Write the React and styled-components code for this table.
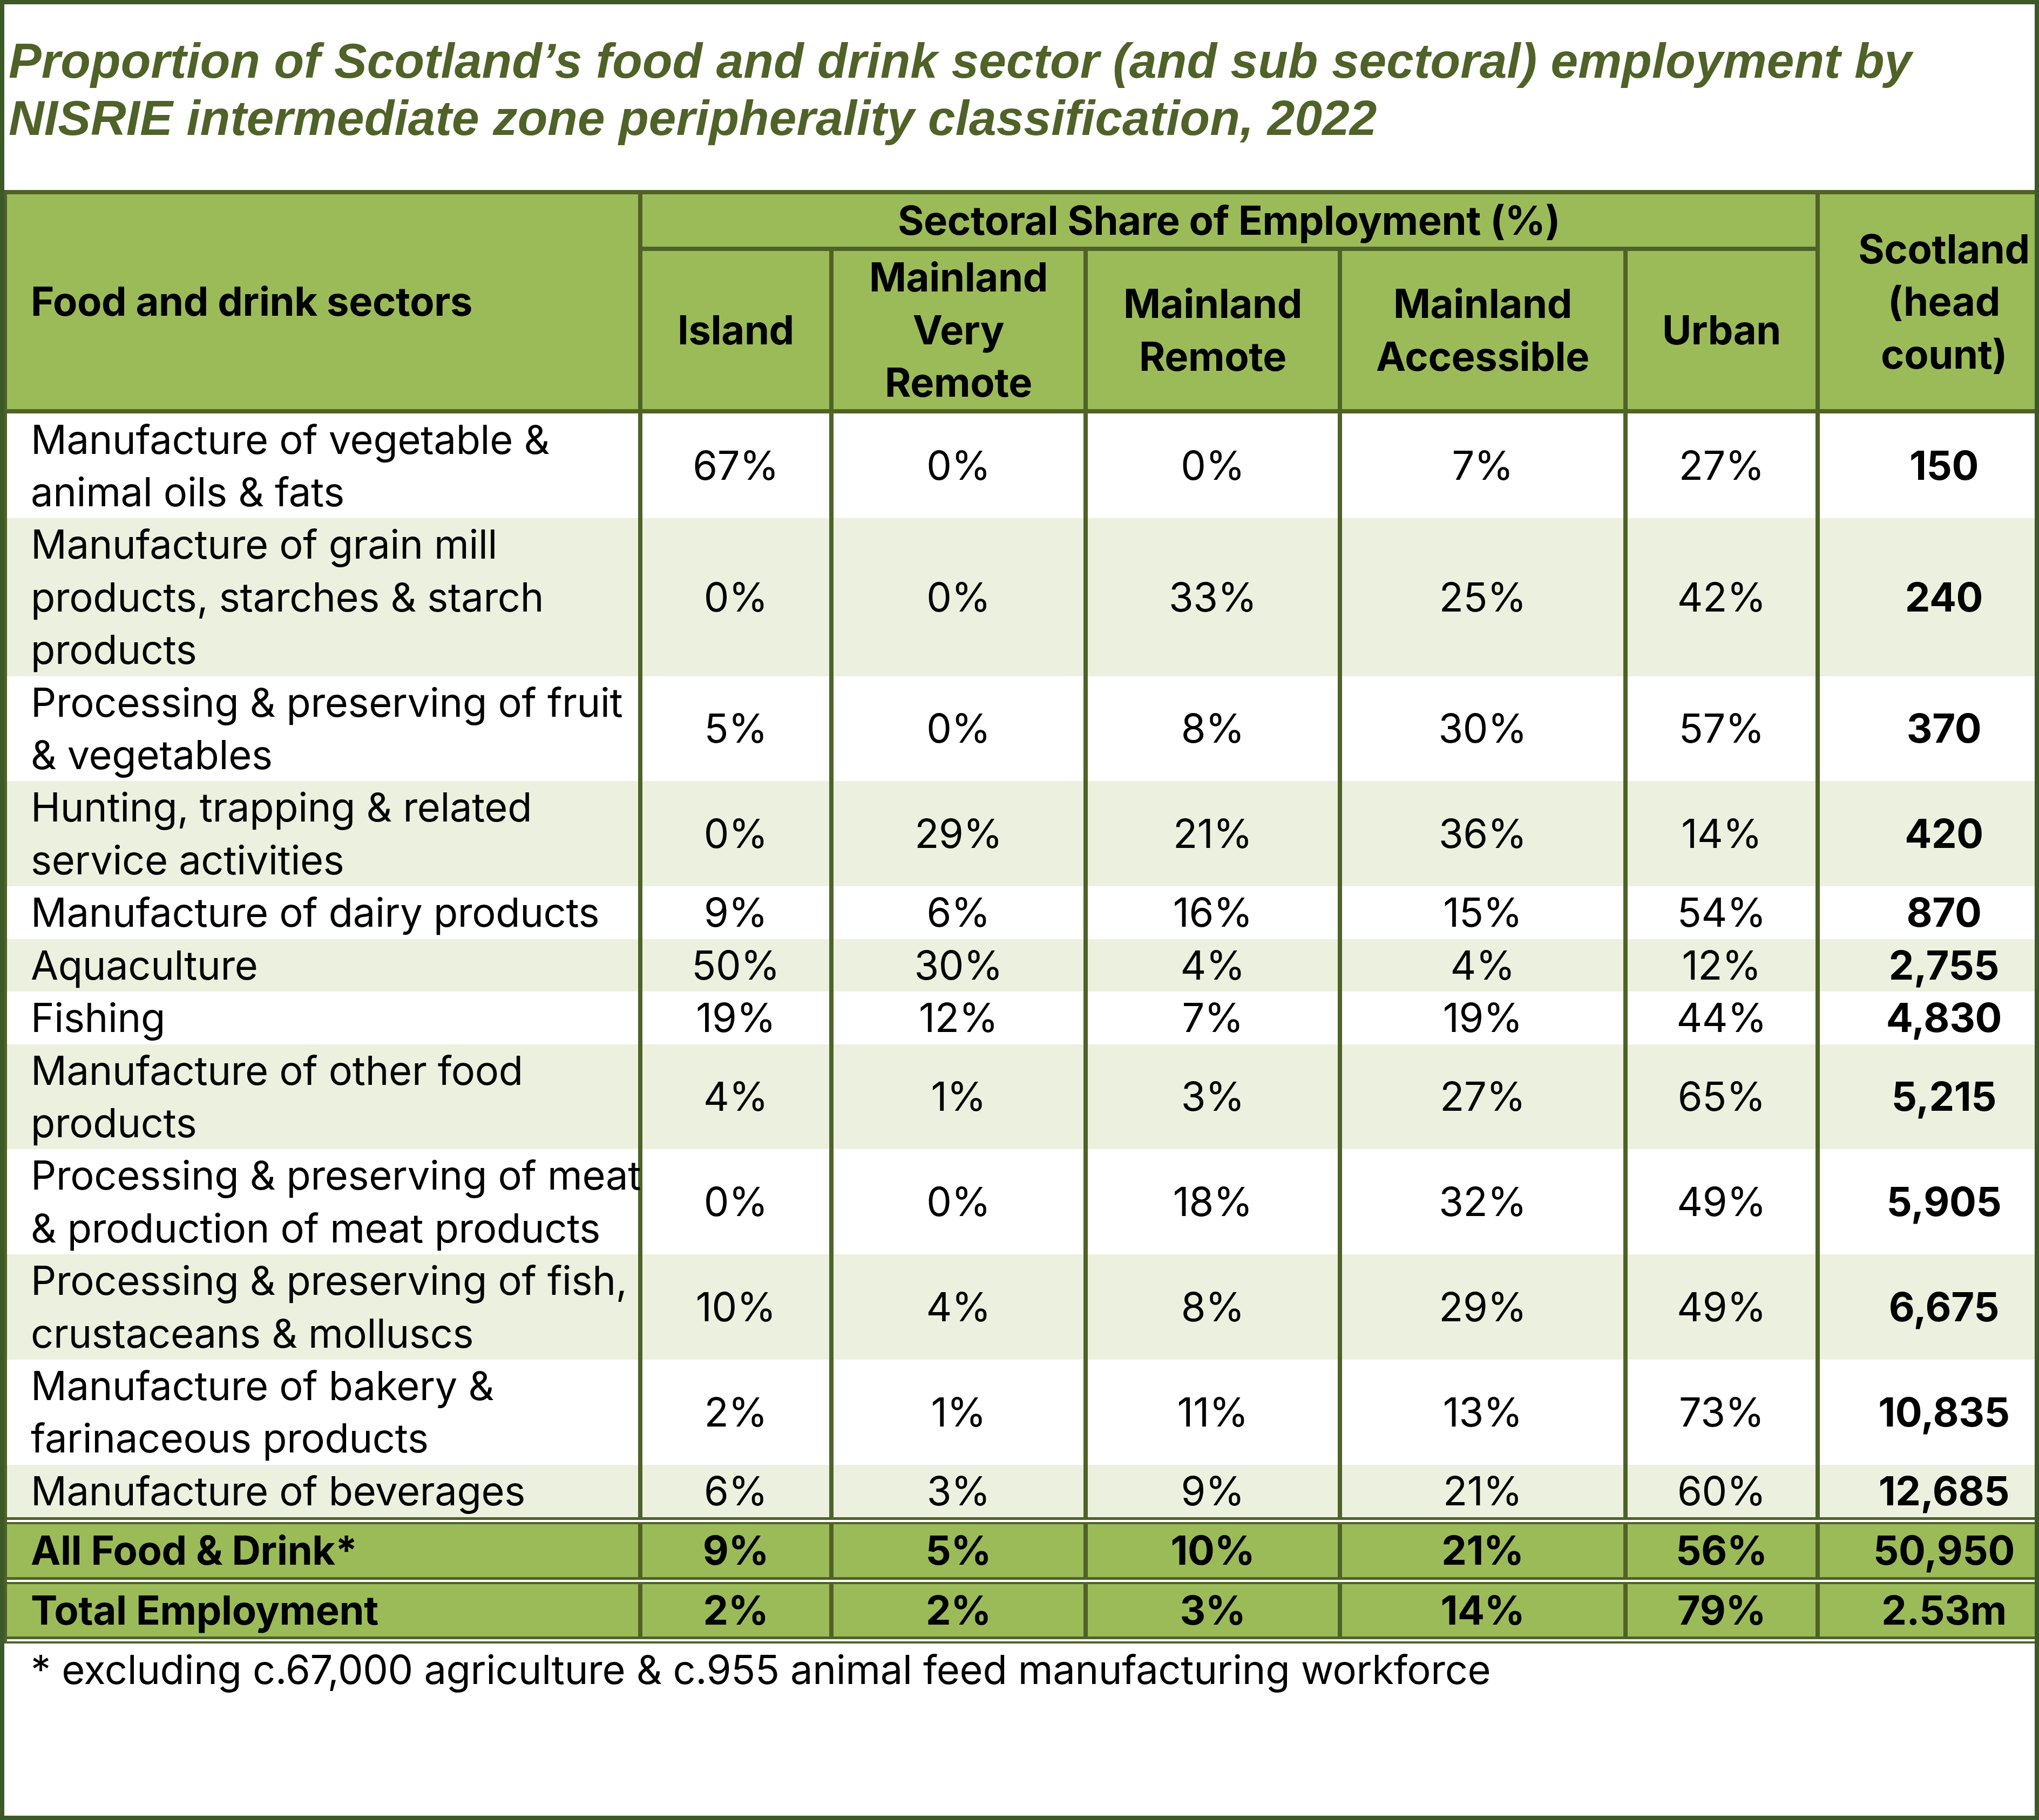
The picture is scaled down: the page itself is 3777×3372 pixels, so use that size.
import React from "react";
import styled, { createGlobalStyle } from "styled-components";

const LINE = "#4f6228";
const FRAME = "#3b5a28";
const HEAD = "#9bbb59";
const BAND = "#ebf1de";

const GlobalStyle = createGlobalStyle`
  html, body {
    margin: 0;
    padding: 0;
    background: #fff;
  }
  * {
    box-sizing: border-box;
  }
`;

const rows = [
  { name: ["Manufacture of vegetable &", "animal oils & fats"], vals: ["67%", "0%", "0%", "7%", "27%"], total: "150" },
  { name: ["Manufacture of grain mill", "products, starches & starch", "products"], vals: ["0%", "0%", "33%", "25%", "42%"], total: "240" },
  { name: ["Processing & preserving of fruit", "& vegetables"], vals: ["5%", "0%", "8%", "30%", "57%"], total: "370" },
  { name: ["Hunting, trapping & related", "service activities"], vals: ["0%", "29%", "21%", "36%", "14%"], total: "420" },
  { name: ["Manufacture of dairy products"], vals: ["9%", "6%", "16%", "15%", "54%"], total: "870" },
  { name: ["Aquaculture"], vals: ["50%", "30%", "4%", "4%", "12%"], total: "2,755" },
  { name: ["Fishing"], vals: ["19%", "12%", "7%", "19%", "44%"], total: "4,830" },
  { name: ["Manufacture of other food", "products"], vals: ["4%", "1%", "3%", "27%", "65%"], total: "5,215" },
  { name: ["Processing & preserving of meat", "& production of meat products"], vals: ["0%", "0%", "18%", "32%", "49%"], total: "5,905" },
  { name: ["Processing & preserving of fish,", "crustaceans & molluscs"], vals: ["10%", "4%", "8%", "29%", "49%"], total: "6,675" },
  { name: ["Manufacture of bakery &", "farinaceous products"], vals: ["2%", "1%", "11%", "13%", "73%"], total: "10,835" },
  { name: ["Manufacture of beverages"], vals: ["6%", "3%", "9%", "21%", "60%"], total: "12,685" },
];

const summary = [
  { name: "All Food & Drink*", vals: ["9%", "5%", "10%", "21%", "56%"], total: "50,950" },
  { name: "Total Employment", vals: ["2%", "2%", "3%", "14%", "79%"], total: "2.53m" },
];

const subHeads = [
  ["Island"],
  ["Mainland", "Very", "Remote"],
  ["Mainland", "Remote"],
  ["Mainland", "Accessible"],
  ["Urban"],
];

const Frame = styled.div`
  width: 3777px;
  height: 3372px;
  border: 8px solid ${FRAME};
  background: #fff;
  font-family: Inter, "Noto Sans", sans-serif;
  color: #000;
  overflow: hidden;
`;

const Title = styled.h1`
  margin: 0;
  height: 344px;
  padding: 52px 0 0 8px;
  font-family: "Liberation Sans", Arial, sans-serif;
  font-style: italic;
  font-weight: 700;
  font-size: 91px;
  line-height: 106px;
  letter-spacing: 0.1px;
  color: ${LINE};
`;

const Grid = styled.div`
  display: grid;
  grid-template-columns: 1177px 354px 471px 471px 529px 356px 398px;
  border-top: 8px solid ${LINE};
  border-left: 5px solid ${LINE};
  font-size: 74px;
  line-height: 97.4px;
  letter-spacing: -0.35px;
`;

const Cell = styled.div`
  display: flex;
  flex-direction: column;
  justify-content: center;
  align-items: ${(p) => (p.$left ? "flex-start" : "center")};
  text-align: ${(p) => (p.$left ? "left" : "center")};
  padding-left: ${(p) => (p.$left ? "44px" : p.$shift ? "62px" : "0")};
  background: ${(p) => p.$bg || "#fff"};
  border-right: ${(p) => (p.$last ? "none" : `8px solid ${LINE}`)};
  font-weight: ${(p) => (p.$bold ? 700 : 400)};
  white-space: nowrap;
`;

const HeadCell = styled(Cell)`
  background: ${HEAD};
  border-bottom: 8px solid ${LINE};
  font-weight: 700;
  grid-row: ${(p) => p.$row};
  grid-column: ${(p) => p.$col};
`;

const DoubleRule = styled.div`
  grid-column: 1 / -1;
  height: 13px;
  border-top: 5px solid ${LINE};
  border-bottom: 4px solid ${LINE};
  background: #fff;
`;

const Footnote = styled.p`
  margin: 0;
  padding-left: 49px;
  font-size: 74px;
  line-height: 97.4px;
  letter-spacing: -0.35px;
`;

const Lines = ({ lines }) =>
  lines.map((l, i) => <span key={i}>{l}</span>);

const App = () => {
  return (
    <>
      <GlobalStyle />
      <Frame>
        <Title>
          Proportion of Scotland’s food and drink sector (and sub sectoral) employment by
          <br />
          NISRIE intermediate zone peripherality classification, 2022
        </Title>
        <Grid>
          <HeadCell $left $row="1 / 3" $col="1">
            Food and drink sectors
          </HeadCell>
          <HeadCell $row="1" $col="2 / 7">
            Sectoral Share of Employment (%)
          </HeadCell>
          <HeadCell $last $shift $row="1 / 3" $col="7">
            <Lines lines={["Scotland", "(head", "count)"]} />
          </HeadCell>
          {subHeads.map((h, i) => (
            <HeadCell key={i} $row="2" $col={`${i + 2}`}>
              <Lines lines={h} />
            </HeadCell>
          ))}

          {rows.map((r, i) => {
            const bg = i % 2 === 1 ? BAND : "#fff";
            return (
              <React.Fragment key={i}>
                <Cell $left $bg={bg}>
                  <Lines lines={r.name} />
                </Cell>
                {r.vals.map((v, j) => (
                  <Cell key={j} $bg={bg}>
                    {v}
                  </Cell>
                ))}
                <Cell $last $shift $bold $bg={bg}>
                  {r.total}
                </Cell>
              </React.Fragment>
            );
          })}

          {summary.map((r, i) => (
            <React.Fragment key={i}>
              <DoubleRule />
              <Cell $left $bold $bg={HEAD}>
                {r.name}
              </Cell>
              {r.vals.map((v, j) => (
                <Cell key={j} $bold $bg={HEAD}>
                  {v}
                </Cell>
              ))}
              <Cell $last $shift $bold $bg={HEAD}>
                {r.total}
              </Cell>
            </React.Fragment>
          ))}
          <DoubleRule />
        </Grid>
        <Footnote>
          * excluding c.67,000 agriculture &amp; c.955 animal feed manufacturing workforce
        </Footnote>
      </Frame>
    </>
  );
};

export default App;
